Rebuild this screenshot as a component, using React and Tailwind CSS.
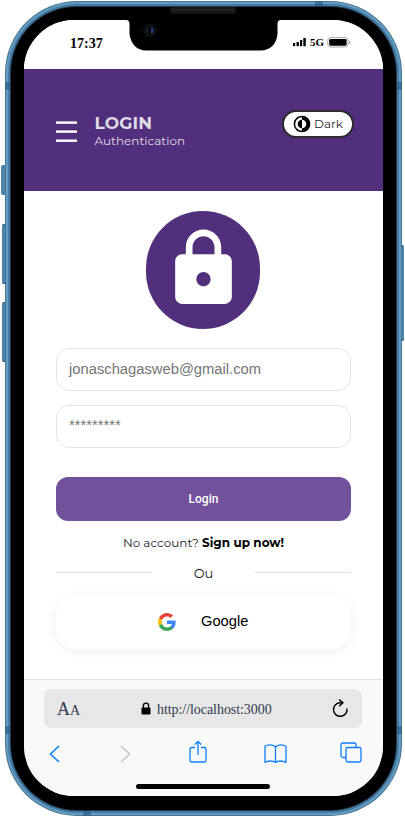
import React from "react";

const geo = "font-['Montserrat','Inter','Open_Sans',sans-serif]";
const arial = "font-['Liberation_Sans',sans-serif]";
const times = "font-['Liberation_Serif',serif]";

function StatusBar() {
  return (
    <div className={`flex h-[49px] shrink-0 items-start bg-white text-black ${times}`}>
      <span className="ml-[46px] mt-[15px] w-[33px] text-[14px] font-bold leading-[18px]">17:37</span>
      <svg className="ml-[190px] mt-[18px]" width="13" height="9" viewBox="0 0 13 9">
        <rect x="0" y="5" width="2.2" height="3.2" rx=".6" />
        <rect x="3.5" y="4" width="2.4" height="4.2" rx=".6" />
        <rect x="7" y="2" width="2.2" height="6.2" rx=".6" />
        <rect x="10.3" y="0" width="2.5" height="8.2" rx=".6" />
      </svg>
      <span className="ml-[4px] mt-[14px] w-[14px] text-[11px] font-bold leading-[16px]">5G</span>
      <svg className="ml-[3px] mt-[17px]" width="24" height="11" viewBox="0 0 24 11">
        <rect x=".8" y=".6" width="20.2" height="9.4" rx="2.6" fill="#fff" stroke="#aaa" />
        <rect x="2.2" y="1.9" width="17.4" height="6.8" rx="1.4" />
        <path d="M22 3.4c1.5.5 1.5 3.3 0 3.8z" fill="#999" />
      </svg>
    </div>
  );
}

function Header() {
  return (
    <header className={`flex h-[122px] shrink-0 items-start bg-[#512f7d] ${geo}`}>
      <svg className="ml-[32px] mt-[52px]" width="21" height="22" viewBox="0 0 21 22" fill="#fff">
        <rect y=".4" width="21" height="2.4" />
        <rect y="9.4" width="21" height="2.4" />
        <rect y="18.500" width="21" height="2.4" />
      </svg>
      <div className="ml-[17.5px] mt-[44px] w-[120px] text-[#dfdce3]">
        <h1 className="whitespace-nowrap text-[17px] font-bold leading-[20px] tracking-[0.15px]">LOGIN</h1>
        <p className="whitespace-nowrap text-[12px] leading-[16px]">Authentication</p>
      </div>
      <button className="ml-[67px] mt-[41px] flex h-[28px] w-[72px] items-center rounded-full border-2 border-[#2b2b2b] bg-white pl-[9px] text-[12px] text-[#2b2b2b]">
        <svg width="18" height="18" viewBox="0 0 18 18" className="shrink-0">
          <circle cx="9" cy="9" r="7.6" fill="#fff" stroke="#000" strokeWidth="1.5" />
          <path d="M9 1.4a7.6 7.6 0 0 1 0 15.2z" />
          <path d="M9 4.7a4.3 4.3 0 0 0 0 8.6z" />
          <path d="M9 4.7a4.3 4.3 0 0 1 0 8.6z" fill="#fff" />
        </svg>
        <span className="ml-[3.5px]">Dark</span>
      </button>
    </header>
  );
}

function GoogleLogo() {
  return (
    <svg width="18" height="18" viewBox="0 0 48 48" className="shrink-0">
      <path fill="#EA4335" d="M24 9.5c3.54 0 6.71 1.22 9.21 3.6l6.85-6.85C35.9 2.38 30.47 0 24 0 14.62 0 6.51 5.38 2.56 13.22l7.98 6.19C12.43 13.72 17.74 9.5 24 9.5z" />
      <path fill="#4285F4" d="M46.98 24.55c0-1.57-.15-3.09-.38-4.55H24v9.02h12.94c-.58 2.96-2.26 5.48-4.78 7.18l7.73 6c4.51-4.18 7.09-10.36 7.09-17.65z" />
      <path fill="#FBBC05" d="M10.53 28.59c-.48-1.45-.76-2.99-.76-4.59s.27-3.14.76-4.59l-7.98-6.19C.92 16.46 0 20.12 0 24c0 3.88.92 7.54 2.56 10.78l7.97-6.19z" />
      <path fill="#34A853" d="M24 48c6.48 0 11.93-2.13 15.89-5.81l-7.73-6c-2.15 1.45-4.92 2.3-8.16 2.3-6.26 0-11.57-4.22-13.47-9.91l-7.98 6.19C6.51 42.62 14.62 48 24 48z" />
    </svg>
  );
}

function LoginForm() {
  return (
    <main className="flex h-[488px] shrink-0 flex-col bg-white px-[32px] pt-[20px]">
      <div className="ml-[-1px] flex h-[118px] w-[114px] justify-center self-center rounded-full bg-[#512f7d] pt-[15px]">
        <svg width="85" height="85" viewBox="0 0 24 24" fill="#fff">
          <path d="M18 8h-1V6c0-2.76-2.24-5-5-5S7 3.24 7 6v2H6c-1.1 0-2 .9-2 2v10c0 1.1.9 2 2 2h12c1.1 0 2-.9 2-2V10c0-1.1-.9-2-2-2zm-6 9c-1.1 0-2-.9-2-2s.9-2 2-2 2 .9 2 2-.9 2-2 2zm3.1-9H8.9V6c0-1.71 1.39-3.1 3.1-3.1 1.71 0 3.1 1.39 3.1 3.1v2z" />
        </svg>
      </div>
      <div className={`mt-[19px] flex h-[43px] items-center rounded-[13px] border border-[#e4e4e4] pl-[12px] text-[14.75px] text-[#757575] ${arial}`}>
        jonaschagasweb@gmail.com
      </div>
      <div className={`mt-[14px] flex h-[43px] items-center rounded-[13px] border border-[#e4e4e4] pb-[2px] pl-[12px] text-[14.75px] text-[#757575] ${arial}`}>
        *********
      </div>
      <button className="mt-[29px] h-[44px] shrink-0 rounded-[12px] bg-[#71519c] font-['Roboto',sans-serif] text-[12px] font-medium text-white">
        Login
      </button>
      <p className={`mt-[14px] whitespace-nowrap text-center text-[12px] leading-[16px] text-[#222] ${geo}`}>
        No account? <b className="font-bold text-black">Sign up now!</b>
      </p>
      <div className="mt-[14px] flex h-[18px] items-center justify-between">
        <i className="mb-[3px] h-px w-[96px] bg-[#dcdcdc]" />
        <span className={`text-[13px] text-[#222] ${geo}`}>Ou</span>
        <i className="mb-[3px] h-px w-[96px] bg-[#dcdcdc]" />
      </div>
      <button className={`mt-[13px] flex h-[53px] shrink-0 items-center rounded-[20px] bg-white pb-[1px] pl-[102px] text-[14.7px] text-black shadow-[0_2px_12px_rgba(0,0,0,0.07)] ${arial}`}>
        <GoogleLogo />
        <span className="ml-[25px] mt-[-1px]">Google</span>
      </button>
    </main>
  );
}

function BrowserBar() {
  return (
    <footer className="flex h-[117px] shrink-0 flex-col items-center border-t border-[#e3e3e3] bg-[#f9f9f9]">
      <div className={`ml-[-1px] mt-[9px] flex h-[39px] w-[318px] items-center rounded-[7px] bg-[#e7e7e7] text-[#333a50] ${times}`}>
        <span className="ml-[13px] mt-[2px] flex w-[24px] items-baseline text-[18px] leading-[20px]">A<span className="text-[14px]">A</span></span>
        <svg className="ml-[60px]" width="10" height="13" viewBox="0 0 10 13">
          <rect x=".5" y="5.4" width="9" height="7" rx="1.2" />
          <path d="M2.4 6V3.7a2.6 2.6 0 0 1 5.2 0V6" fill="none" stroke="#000" strokeWidth="1.4" />
        </svg>
        <span className="ml-[6px] mt-[1px] w-[116px] whitespace-nowrap text-[14px] tracking-[-0.06px]">http://localhost:3000</span>
        <svg className="ml-[59px]" width="18" height="20" viewBox="0 0 18 20" fill="none" stroke="#000" strokeWidth="1.4">
          <path d="M11 3.700H8.400A6.800 6.800 0 1 0 15 9.500" />
          <path d="M7.200 .6l3.700 3.100-3.700 3.500" />
        </svg>
      </div>
      <div className="mt-[13px] flex h-[26px] w-full items-center text-[#0a7cff]">
        <svg className="ml-[25px]" width="11" height="18" viewBox="0 0 11 18" fill="none" stroke="currentColor" strokeWidth="1.5"><path d="M10 1L1.5 9l8.500 8" /></svg>
        <svg className="ml-[60px]" width="11" height="18" viewBox="0 0 11 18" fill="none" stroke="#c4c4c4" strokeWidth="1.5"><path d="M1 1l8.500 8L1 17" /></svg>
        <svg className="mb-[4px] ml-[58px]" width="18" height="24" viewBox="0 0 18 24" fill="none" stroke="currentColor" strokeWidth="1.300">
          <path d="M6 7.500H2.500a1.500 1.500 0 0 0-1.500 1.500v11.500a1.500 1.500 0 0 0 1.500 1.500h13a1.500 1.500 0 0 0 1.500-1.500V9a1.500 1.500 0 0 0-1.500-1.500H12M9 15V1.500M5.800 4.500L9 1.300l3.200 3.200" />
        </svg>
        <svg className="mb-[1px] ml-[57px]" width="23" height="20" viewBox="0 0 23 20" fill="none" stroke="currentColor" strokeWidth="1.300" strokeLinejoin="round">
          <path d="M11.500 3C9.500.300 3.500.300 1 2.500v16c3-2 8-2 10.500 0 2.500-2 7.500-2 10.500 0v-16C19.500.300 13.500.300 11.500 3zM11.500 3v15.500" />
        </svg>
        <svg className="mb-[3px] ml-[53px]" width="22" height="21" viewBox="0 0 22 21" fill="none" stroke="currentColor" strokeWidth="1.300">
          <rect x="6" y="5.500" width="15" height="14.500" rx="1.800" />
          <path d="M6 15.500H3A2 2 0 0 1 1 13.500V3a2 2 0 0 1 2-2h11a2 2 0 0 1 2 2v2.500" />
        </svg>
      </div>
      <div className="ml-[-2px] mt-[17px] h-[5px] w-[134px] rounded-full bg-black" />
    </footer>
  );
}

export default function App() {
  return (
    <div className="relative h-[816px] w-[405px] overflow-hidden bg-white pl-[5px] pt-[1px]">
      <i className="absolute left-[1px] top-[165px] h-[30px] w-[5px] rounded-l-[2px] bg-[#4e83aa]" />
      <i className="absolute left-[2px] top-[224px] h-[60px] w-[4px] rounded-l-[2px] border-y border-[#244e6d] bg-[#4e83aa]" />
      <i className="absolute left-[2px] top-[302px] h-[60px] w-[4px] rounded-l-[2px] border-y border-[#244e6d] bg-[#4e83aa]" />
      <i className="absolute left-[401px] top-[245px] h-[96px] w-[3px] rounded-r-[2px] border-y border-[#244e6d] bg-[#4e83aa]" />
      <div className="relative h-[815px] w-[397px] rounded-[72px] bg-[#477592] p-[1px]">
        <div className="h-full rounded-[71px] bg-[#649bc1] p-[2px]">
          <div className="h-full rounded-[69px] bg-[#447ba4] p-[2px]">
            <div className="h-full rounded-[67px] bg-[#23394a] p-[1px]">
              <div className="h-full rounded-[66px] bg-black p-[13px]">
                <div className="flex h-[776px] w-[359px] flex-col overflow-hidden rounded-[50px] bg-white">
                  <StatusBar />
                  <Header />
                  <LoginForm />
                  <BrowserBar />
                </div>
              </div>
            </div>
          </div>
        </div>
        <i className="absolute left-0 top-[81px] h-[8px] w-[5px] bg-[#2c5f85]/70" />
        <i className="absolute right-0 top-[81px] h-[8px] w-[5px] bg-[#2c5f85]/70" />
        <i className="absolute left-0 top-[725px] h-[8px] w-[5px] bg-[#2c5f85]/70" />
        <i className="absolute right-0 top-[725px] h-[8px] w-[5px] bg-[#2c5f85]/70" />
        <i className="absolute left-[310px] top-0 h-[5px] w-[8px] bg-[#2c5f85]/70" />
        <i className="absolute bottom-0 left-[78px] h-[5px] w-[8px] bg-[#2c5f85]/70" />
      </div>
      <svg className="absolute left-[124px] top-[5px]" width="160" height="47" viewBox="0 0 160 47">
        <path d="M1 14h158v1h-2q-3.500 0-3.500 4v10q-2 16-17 16.500H22Q8 45 5.500 29V19q0-4-3.500-4H1z" />
        <path d="M46 2v4q0 3 3 3h60q3 0 3-3V2z" fill="#141414" />
        <path d="M48 5h62" stroke="#292929" strokeWidth="2.500" strokeDasharray="1 .5" />
        <circle cx="26" cy="25.500" r="7" fill="#0c0e10" />
        <circle cx="26" cy="25.500" r="3.600" fill="#14272f" />
        <ellipse cx="28" cy="25.500" rx="1.300" ry="2.800" fill="#293b8a" />
        <ellipse cx="25.500" cy="25.500" rx="1.600" ry="3.600" fill="#000" />
      </svg>
    </div>
  );
}
